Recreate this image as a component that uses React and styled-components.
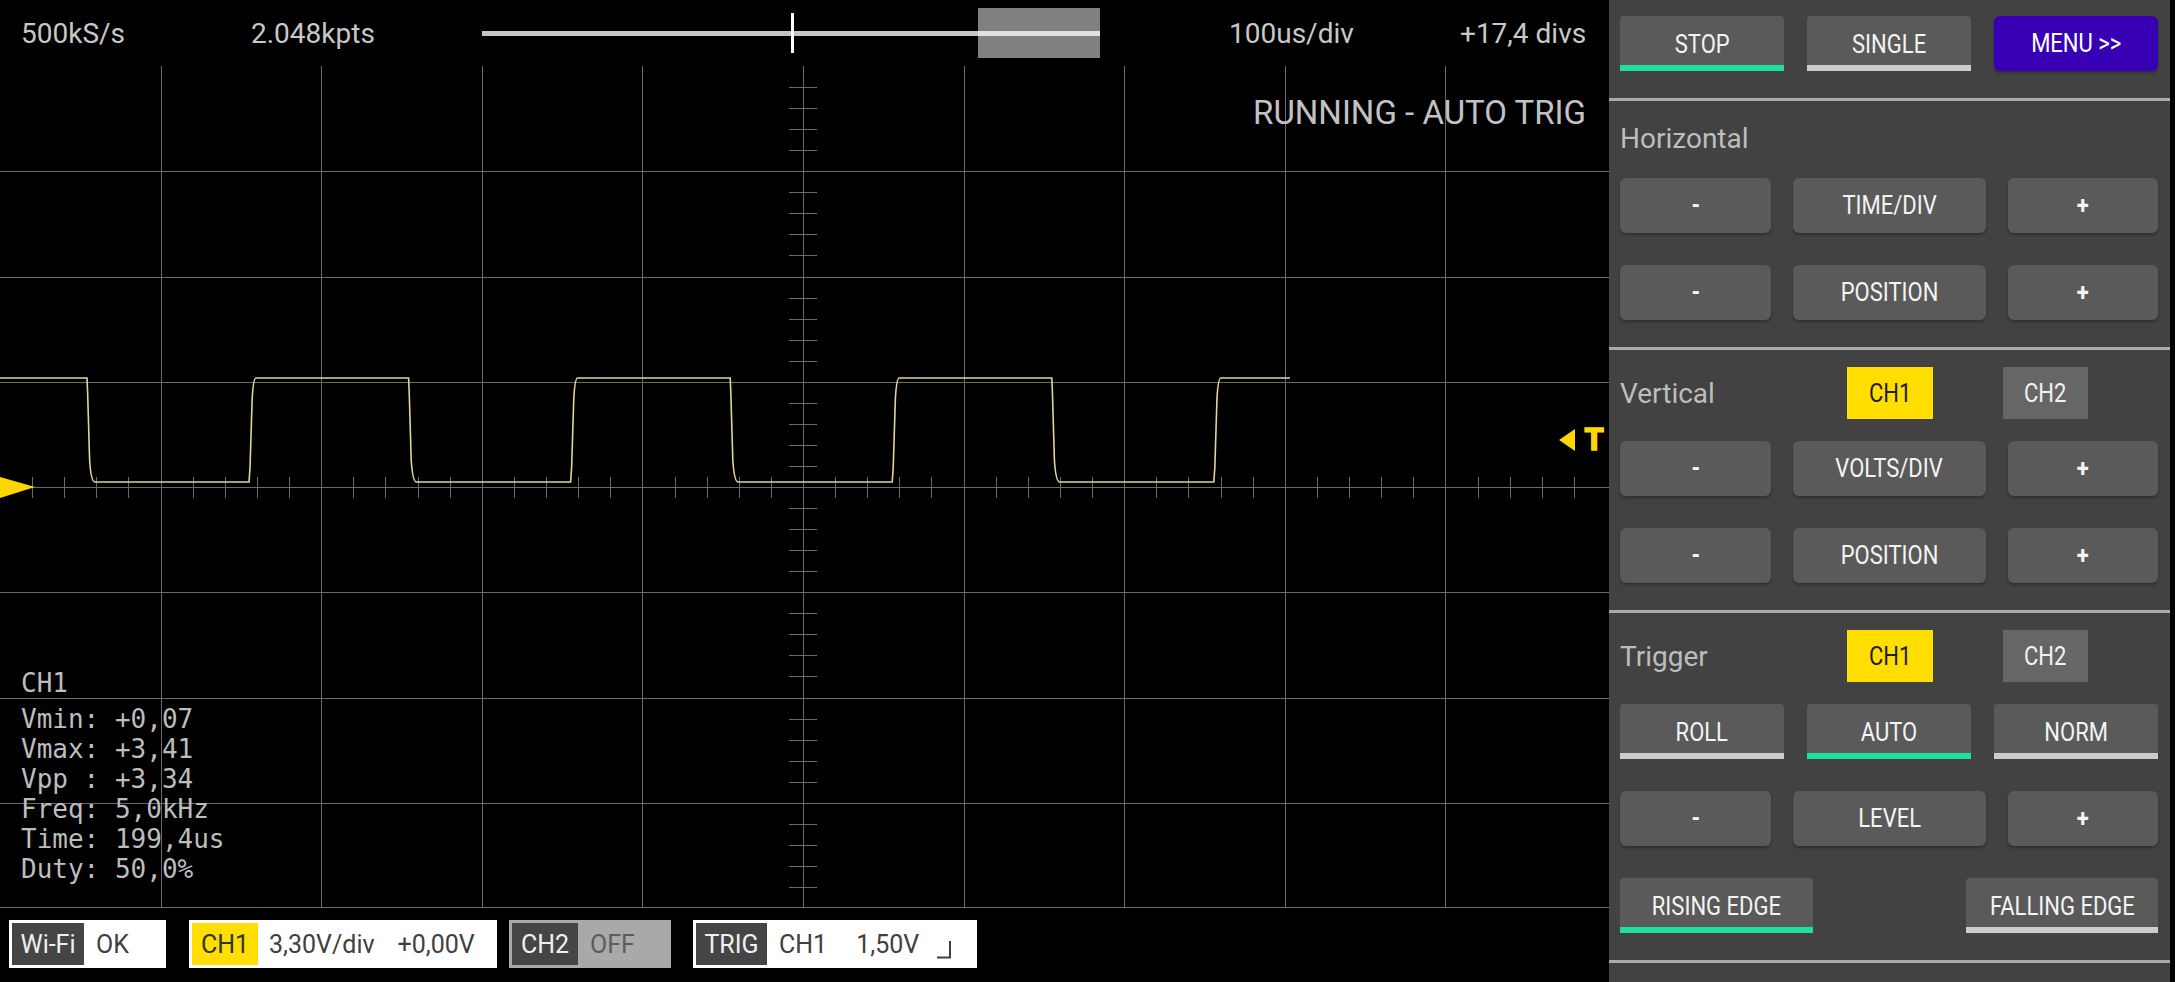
import React from 'react';
import styled, { createGlobalStyle } from 'styled-components';

const GlobalStyle = createGlobalStyle`
  html, body {
    margin: 0;
    padding: 0;
    background: #000;
    height: 982px;
    overflow: hidden;
  }
  body {
    font-family: Roboto, "Liberation Sans", sans-serif;
  }
  button {
    font-family: inherit;
    border: none;
    padding: 0;
    cursor: pointer;
  }
`;

// screen geometry (px)
const SCREEN_W = 1609;
const SCREEN_H = 842;
const DIV_X = 160.6;
const DIV_Y = 105.25;
const MID_X = 803;
const MID_Y = 421;

const Layout = styled.div`
  display: flex;
  width: 2175px;
  height: 982px;
`;

const Scope = styled.main`
  width: ${SCREEN_W}px;
  display: flex;
  flex-direction: column;
`;

const TopBar = styled.header`
  height: 66px;
  display: flex;
  align-items: center;
  padding-left: 21px;
`;

const Readout = styled.span`
  flex-shrink: 0;
  width: ${(p) => p.$w || 'auto'};
  font-size: 28px;
  color: #c8c8c8;
  white-space: nowrap;
`;

const Slider = styled.div`
  position: relative;
  flex-shrink: 0;
  width: 618px;
  height: 50px;
  margin-right: 129px;
  display: flex;
  align-items: center;
`;

const SliderWindow = styled.div`
  position: absolute;
  left: 496px;
  top: 0;
  width: 122px;
  height: 50px;
  background: #808080;
`;

const SliderTrack = styled.div`
  position: relative;
  width: 100%;
  height: 5px;
  background: linear-gradient(to right, #c4c4c4 0 496px, #e2e2e2 496px);
`;

const SliderMark = styled.div`
  position: absolute;
  left: 309px;
  top: 5px;
  width: 3px;
  height: 40px;
  background: #fff;
`;

const Screen = styled.div`
  position: relative;
  height: ${SCREEN_H}px;
`;

const Graticule = styled.svg`
  display: block;
`;

const RunState = styled.div`
  position: absolute;
  top: 27px;
  right: 23px;
  font-size: 33px;
  color: #c2c2c2;
  white-space: nowrap;
`;

const Measures = styled.pre`
  position: absolute;
  left: 21px;
  top: 602px;
  margin: 0;
  font-family: "DejaVu Sans Mono", "Liberation Mono", monospace;
  font-size: 26px;
  line-height: 30px;
  color: #bdbdbd;
`;

const MeasureHead = styled.div`
  margin-bottom: 6px;
`;

const StatusBar = styled.footer`
  height: 74px;
  box-sizing: border-box;
  display: flex;
  align-items: flex-start;
  padding: 12px 0 0 9px;
`;

const StatusBox = styled.div`
  box-sizing: border-box;
  display: flex;
  align-items: center;
  width: ${(p) => p.$w}px;
  height: 48px;
  padding: 3px;
  margin-left: ${(p) => p.$ml || 0}px;
  background: ${(p) => p.$bg || '#fff'};
`;

const StatusTag = styled.span`
  display: flex;
  align-items: center;
  justify-content: center;
  width: ${(p) => p.$w}px;
  height: 42px;
  background: ${(p) => p.$bg};
  color: ${(p) => p.$fg};
  font-size: 25px;
`;

const StatusValue = styled.span`
  margin-left: ${(p) => p.$ml}px;
  color: ${(p) => p.$fg || '#404040'};
  font-size: 25px;
  white-space: nowrap;
`;

const EdgeIcon = styled.svg`
  margin-left: ${(p) => p.$ml}px;
  margin-top: 6px;
`;

const Panel = styled.aside`
  width: 561px;
  height: 982px;
  background: #424242;
  display: flex;
  flex-direction: column;
`;

const TopControls = styled.div`
  display: flex;
  gap: 23px;
  padding: 16px 12px 27px 11px;
`;

const Divider = styled.div`
  height: 3px;
  background: #ababab;
`;

const Section = styled.section`
  display: flex;
  flex-direction: column;
  padding: ${(p) => p.$top}px 12px 27px 11px;
`;

const SectionHead = styled.div`
  display: flex;
  align-items: center;
  height: 52px;
  margin-bottom: ${(p) => p.$gap}px;
`;

const SectionTitle = styled.div`
  width: 234px;
  font-size: 28px;
  color: #bdbdbd;
`;

const ChannelChip = styled.button`
  width: 88px;
  height: 52px;
  margin-right: 70px;
  font-size: 25px;
  background: ${(p) => (p.$on ? '#ffde00' : '#666')};
  color: ${(p) => (p.$on ? '#1e1e1e' : '#f2f2f2')};
`;

const ButtonRow = styled.div`
  display: flex;
  justify-content: space-between;
  & + & {
    margin-top: 32px;
  }
`;

const StepButton = styled.button`
  width: ${(p) => p.$w}px;
  height: 55px;
  border-radius: 6px;
  background: #5a5a5a;
  color: #f4f4f4;
  font-size: 25px;
  font-weight: ${(p) => (p.$sign ? 700 : 400)};
  box-shadow: 0 2px 3px rgba(0, 0, 0, 0.3);
`;

const ModeButton = styled.button`
  box-sizing: border-box;
  width: ${(p) => p.$w}px;
  height: 55px;
  padding-top: 8px;
  border-radius: 4px 4px 0 0;
  background: #5a5a5a;
  border-bottom: 6px solid ${(p) => (p.$active ? '#1bdfa3' : '#cccccc')};
  color: #f4f4f4;
  font-size: 25px;
`;

const MenuButton = styled.button`
  width: 164px;
  height: 55px;
  border-radius: 6px;
  background: #3800b4;
  color: #fff;
  font-size: 25px;
  box-shadow: 0 2px 3px rgba(0, 0, 0, 0.3);
`;

const Caption = styled.span`
  display: inline-block;
  transform: scaleX(0.88);
  white-space: nowrap;
`;

function wavePath() {
  const hi = 312;
  const lo = 416;
  const period = 321.6;
  let d = `M0 ${hi}`;
  for (let k = 0; k < 4; k++) {
    const f = 87 + k * period;
    d += ` L${f} ${hi} L${f + 0.6} ${hi + 14} L${f + 2.6} ${hi + 82} Q${f + 4} ${lo} ${f + 8} ${lo}`;
    const r = 249 + k * period;
    if (r > 1290) break;
    d += ` L${r} ${lo} L${r + 1} ${lo - 14} L${r + 3.2} ${lo - 84} Q${r + 4.4} ${hi} ${r + 7} ${hi}`;
  }
  d += ` L1290 ${hi}`;
  return d;
}

function Grid() {
  const lines = [];
  for (let i = 1; i < 10; i++) {
    const x = Math.round(i * DIV_X) + 0.5;
    lines.push(<line key={`v${i}`} x1={x} y1={0} x2={x} y2={SCREEN_H} />);
  }
  for (let j = 1; j <= 8; j++) {
    const y = Math.min(Math.round(j * DIV_Y), SCREEN_H - 1) + 0.5;
    lines.push(<line key={`h${j}`} x1={0} y1={y} x2={SCREEN_W} y2={y} />);
  }
  for (let t = 1; t < 50; t++) {
    const x = Math.round(t * (DIV_X / 5)) + 0.5;
    lines.push(<line key={`tx${t}`} x1={x} y1={MID_Y - 10} x2={x} y2={MID_Y + 11} />);
  }
  for (let t = 1; t < 40; t++) {
    const y = Math.round(t * (DIV_Y / 5)) + 0.5;
    lines.push(<line key={`ty${t}`} x1={MID_X - 14} y1={y} x2={MID_X + 14} y2={y} />);
  }

  return (
    <Graticule width={SCREEN_W} height={SCREEN_H} viewBox={`0 0 ${SCREEN_W} ${SCREEN_H}`}>
      <g stroke="#6a6a6a" strokeWidth="1" shapeRendering="crispEdges">
        {lines}
      </g>
      <path d={wavePath()} fill="none" stroke="#e4d49b" strokeWidth="1.6" />
      <polygon points={`0,${MID_Y - 10} 35,${MID_Y} 0,${MID_Y + 11}`} fill="#ffd600" />
      <polygon points="1559,374 1575,363 1575,385" fill="#ffd600" />
      <text
        x="1594"
        y="384"
        textAnchor="middle"
        fontFamily="Roboto, sans-serif"
        fontWeight="700"
        fontSize="31"
        fill="#ffd600"
        stroke="#ffd600"
        strokeWidth="1.6"
      >
        T
      </text>
    </Graticule>
  );
}

export default function App() {
  return (
    <>
      <GlobalStyle />
      <Layout>
        <Scope>
          <TopBar>
            <Readout $w="230px">500kS/s</Readout>
            <Readout $w="231px">2.048kpts</Readout>
            <Slider>
              <SliderWindow />
              <SliderTrack />
              <SliderMark />
            </Slider>
            <Readout $w="231px">100us/div</Readout>
            <Readout>+17,4 divs</Readout>
          </TopBar>

          <Screen>
            <Grid />
            <RunState>RUNNING - AUTO TRIG</RunState>
            <Measures>
              <MeasureHead>CH1</MeasureHead>
              {'Vmin: +0,07\nVmax: +3,41\nVpp : +3,34\nFreq: 5,0kHz\nTime: 199,4us\nDuty: 50,0%'}
            </Measures>
          </Screen>

          <StatusBar>
            <StatusBox $w={157}>
              <StatusTag $w={72} $bg="#454545" $fg="#f0f0f0">Wi-Fi</StatusTag>
              <StatusValue $ml={12}>OK</StatusValue>
            </StatusBox>
            <StatusBox $w={308} $ml={23}>
              <StatusTag $w={66} $bg="#ffde00" $fg="#333">CH1</StatusTag>
              <StatusValue $ml={11}>3,30V/div</StatusValue>
              <StatusValue $ml={23}>+0,00V</StatusValue>
            </StatusBox>
            <StatusBox $w={162} $ml={12} $bg="#a9a9a9">
              <StatusTag $w={66} $bg="#454545" $fg="#f0f0f0">CH2</StatusTag>
              <StatusValue $ml={12} $fg="#5c5c5c">OFF</StatusValue>
            </StatusBox>
            <StatusBox $w={284} $ml={22}>
              <StatusTag $w={71} $bg="#454545" $fg="#f0f0f0">TRIG</StatusTag>
              <StatusValue $ml={12}>CH1</StatusValue>
              <StatusValue $ml={29}>1,50V</StatusValue>
              <EdgeIcon $ml={18} width="15" height="24" viewBox="0 0 15 24">
                <path d="M0 22.5 H13 V6" fill="none" stroke="#404040" strokeWidth="2" />
              </EdgeIcon>
            </StatusBox>
          </StatusBar>
        </Scope>

        <Panel>
          <TopControls>
            <ModeButton $w={164} $active><Caption>STOP</Caption></ModeButton>
            <ModeButton $w={164}><Caption>SINGLE</Caption></ModeButton>
            <MenuButton><Caption>MENU &gt;&gt;</Caption></MenuButton>
          </TopControls>
          <Divider />

          <Section $top={11}>
            <SectionHead $gap={14}>
              <SectionTitle>Horizontal</SectionTitle>
            </SectionHead>
            <ButtonRow>
              <StepButton $w={151} $sign><Caption>-</Caption></StepButton>
              <StepButton $w={193}><Caption>TIME/DIV</Caption></StepButton>
              <StepButton $w={150} $sign><Caption>+</Caption></StepButton>
            </ButtonRow>
            <ButtonRow>
              <StepButton $w={151} $sign><Caption>-</Caption></StepButton>
              <StepButton $w={193}><Caption>POSITION</Caption></StepButton>
              <StepButton $w={150} $sign><Caption>+</Caption></StepButton>
            </ButtonRow>
          </Section>
          <Divider />

          <Section $top={17}>
            <SectionHead $gap={22}>
              <SectionTitle>Vertical</SectionTitle>
              <ChannelChip $on><Caption>CH1</Caption></ChannelChip>
              <ChannelChip><Caption>CH2</Caption></ChannelChip>
            </SectionHead>
            <ButtonRow>
              <StepButton $w={151} $sign><Caption>-</Caption></StepButton>
              <StepButton $w={193}><Caption>VOLTS/DIV</Caption></StepButton>
              <StepButton $w={150} $sign><Caption>+</Caption></StepButton>
            </ButtonRow>
            <ButtonRow>
              <StepButton $w={151} $sign><Caption>-</Caption></StepButton>
              <StepButton $w={193}><Caption>POSITION</Caption></StepButton>
              <StepButton $w={150} $sign><Caption>+</Caption></StepButton>
            </ButtonRow>
          </Section>
          <Divider />

          <Section $top={17}>
            <SectionHead $gap={22}>
              <SectionTitle>Trigger</SectionTitle>
              <ChannelChip $on><Caption>CH1</Caption></ChannelChip>
              <ChannelChip><Caption>CH2</Caption></ChannelChip>
            </SectionHead>
            <ButtonRow>
              <ModeButton $w={164}><Caption>ROLL</Caption></ModeButton>
              <ModeButton $w={164} $active><Caption>AUTO</Caption></ModeButton>
              <ModeButton $w={164}><Caption>NORM</Caption></ModeButton>
            </ButtonRow>
            <ButtonRow>
              <StepButton $w={151} $sign><Caption>-</Caption></StepButton>
              <StepButton $w={193}><Caption>LEVEL</Caption></StepButton>
              <StepButton $w={150} $sign><Caption>+</Caption></StepButton>
            </ButtonRow>
            <ButtonRow>
              <ModeButton $w={193} $active><Caption>RISING EDGE</Caption></ModeButton>
              <ModeButton $w={192}><Caption>FALLING EDGE</Caption></ModeButton>
            </ButtonRow>
          </Section>
          <Divider />
        </Panel>
      </Layout>
    </>
  );
}
